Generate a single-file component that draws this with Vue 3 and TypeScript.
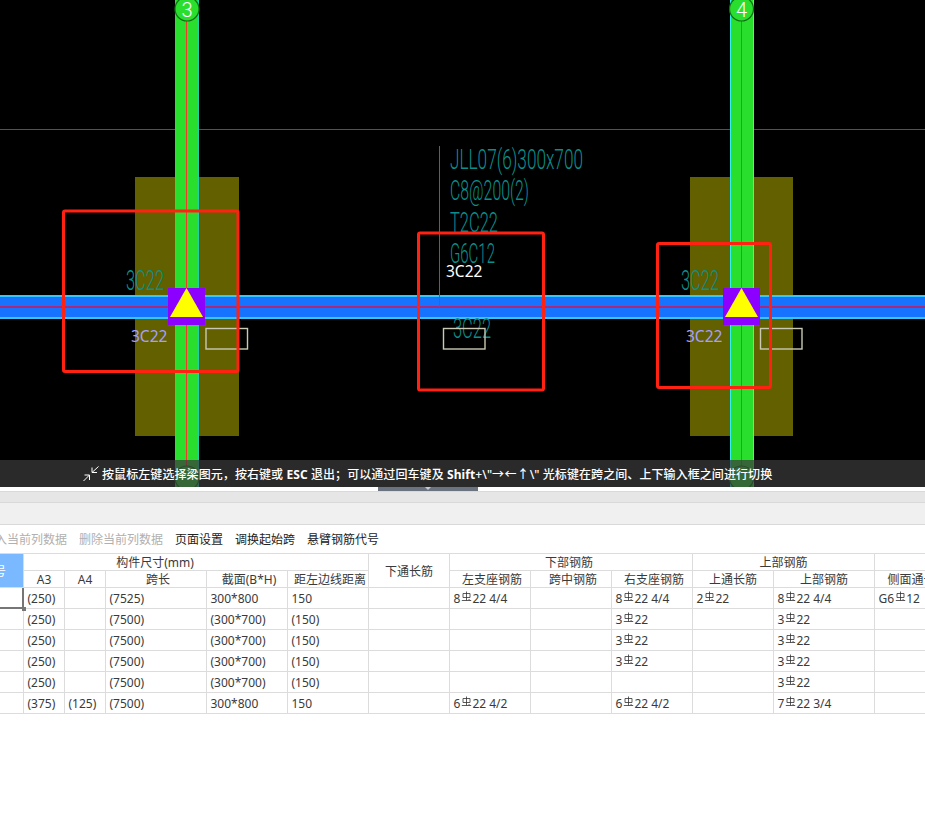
<script setup lang="ts">
interface BeamAxis { label: string; left: number; axis: number; bubble: number; band: number; bandWidth: number; node: number; edge: string }
interface Cell { pre?: string; post?: string; text?: string }

const axes: BeamAxis[] = [
  { label: '3', left: 175, axis: 186.5, bubble: 187, band: 135, bandWidth: 104, node: 168, edge: '#22cfa8' },
  { label: '4', left: 730, axis: 741.5, bubble: 741.5, band: 690, bandWidth: 103, node: 723, edge: '#30f0f0' },
]
const colWidths = [24, 41, 41, 101, 81, 81, 81, 81, 81, 81, 81, 101, 86]

const rows: Cell[][] = [
  [{ text: '(250)' }, {}, { text: '(7525)' }, { text: '300*800' }, { text: '150' }, {}, { pre: '8', post: '22 4/4' }, {}, { pre: '8', post: '22 4/4' }, { pre: '2', post: '22' }, { pre: '8', post: '22 4/4' }, { pre: 'G6', post: '12' }],
  [{ text: '(250)' }, {}, { text: '(7500)' }, { text: '(300*700)' }, { text: '(150)' }, {}, {}, {}, { pre: '3', post: '22' }, {}, { pre: '3', post: '22' }, {}],
  [{ text: '(250)' }, {}, { text: '(7500)' }, { text: '(300*700)' }, { text: '(150)' }, {}, {}, {}, { pre: '3', post: '22' }, {}, { pre: '3', post: '22' }, {}],
  [{ text: '(250)' }, {}, { text: '(7500)' }, { text: '(300*700)' }, { text: '(150)' }, {}, {}, {}, { pre: '3', post: '22' }, {}, { pre: '3', post: '22' }, {}],
  [{ text: '(250)' }, {}, { text: '(7500)' }, { text: '(300*700)' }, { text: '(150)' }, {}, {}, {}, {}, {}, { pre: '3', post: '22' }, {}],
  [{ text: '(375)' }, { text: '(125)' }, { text: '(7500)' }, { text: '300*800' }, { text: '150' }, {}, { pre: '6', post: '22 4/2' }, {}, { pre: '6', post: '22 4/2' }, {}, { pre: '7', post: '22 3/4' }, {}],
]
</script>

<template>
  <div class="page">
    <section class="canvas">
      <svg class="drawing" width="925" height="487" viewBox="0 0 925 487">
        <rect width="925" height="487" fill="#000" />
        <line x1="0" y1="129.5" x2="925" y2="129.5" class="ref-line" />

        <g v-for="a in axes" :key="a.label">
          <rect :x="a.band" y="177" :width="a.bandWidth" height="259" fill="#636000" />
          <rect :x="a.left" y="0" width="24" height="487" fill="#2ade2e" />
          <line :x1="a.left + 0.5" y1="0" :x2="a.left + 0.5" y2="487" :stroke="a.edge" />
          <line :x1="a.left + 23.5" y1="0" :x2="a.left + 23.5" y2="487" :stroke="a.edge" />
          <line :x1="a.axis" y1="0" :x2="a.axis" y2="487" class="col-axis" />
          <circle :cx="a.bubble" cy="9" r="12" class="axis-bubble" />
          <circle :cx="a.bubble" cy="478" r="12" class="axis-bubble" />
          <text :x="a.bubble" y="17" class="axis-label">{{ a.label }}</text>
        </g>

        <rect x="0" y="295" width="925" height="24" fill="#1573ff" />
        <rect x="0" y="295" width="925" height="2" fill="#36c6ff" />
        <rect x="0" y="317" width="925" height="2" fill="#36c6ff" />
        <rect x="0" y="306" width="925" height="2" fill="#a8287c" />

        <g v-for="a in axes" :key="'n' + a.label">
          <rect :x="a.node" y="288" width="37" height="37" fill="#8c00ff" />
          <polygon :points="`${a.node + 18.5},288 ${a.node + 2},317 ${a.node + 35},317`" fill="#ffff00" />
        </g>

        <line x1="439.5" y1="146" x2="439.5" y2="307" class="leader" />
        <text x="450" y="169" class="cad" textLength="133" lengthAdjust="spacingAndGlyphs">JLL07(6)300x700</text>
        <text x="450" y="200" class="cad" textLength="79" lengthAdjust="spacingAndGlyphs">C8@200(2)</text>
        <text x="450" y="232" class="cad" textLength="48" lengthAdjust="spacingAndGlyphs">T2C22</text>
        <text x="450" y="263" class="cad" textLength="45" lengthAdjust="spacingAndGlyphs">G6C12</text>
        <text x="126" y="290" class="cad" textLength="38" lengthAdjust="spacingAndGlyphs">3C22</text>
        <text x="681" y="290" class="cad" textLength="38" lengthAdjust="spacingAndGlyphs">3C22</text>
        <text x="453" y="338" class="cad" textLength="38" lengthAdjust="spacingAndGlyphs">3C22</text>

        <text x="131" y="342" class="tag">3C22</text>
        <text x="686" y="342" class="tag">3C22</text>
        <text x="446" y="277" class="tag tag-white">3C22</text>

        <rect x="206" y="328.5" width="41.5" height="20.5" class="box" />
        <rect x="760.5" y="328.5" width="41.5" height="20.5" class="box" />
        <rect x="443.5" y="328.5" width="41.5" height="20.5" class="box" />

        <rect x="63.5" y="211" width="174.5" height="160.5" rx="1.5" class="mark" />
        <rect x="418.5" y="233" width="125" height="157" rx="1.5" class="mark" />
        <rect x="657.5" y="243.5" width="113" height="144" rx="1.5" class="mark" />
      </svg>

      <div class="hint">
        <svg class="hint-icon" width="16" height="16" viewBox="0 0 16 16">
          <path d="M15.5 .5 9 6.5M9 1.5v5h5M.5 15 6.5 9M1.5 9h5v5" />
        </svg>
        <span>按鼠标左键选择梁图元，按右键或 <b>ESC</b> 退出；可以通过回车键及 <b>Shift</b>+\"<span class="arrows">→←↑</span>\" 光标键在跨之间、上下输入框之间进行切换</span>
      </div>
    </section>

    <div class="splitter">
      <div class="grip"><i></i></div>
    </div>
    <div class="band band-tab"></div>
    <div class="band band-tool"></div>

    <div class="toolbar">
      <span class="tool tool-first off">插入当前列数据</span>
      <span class="tool off">删除当前列数据</span>
      <span class="tool">页面设置</span>
      <span class="tool">调换起始跨</span>
      <span class="tool">悬臂钢筋代号</span>
    </div>

    <div class="grid-wrap">
      <table class="grid">
        <colgroup>
          <col v-for="(w, i) in colWidths" :key="i" :style="{ width: w + 'px' }" />
        </colgroup>
        <thead>
          <tr>
            <th rowspan="2" class="corner"><span>跨号</span></th>
            <th colspan="5" class="group-size">构件尺寸(mm)</th>
            <th rowspan="2">下通长筋</th>
            <th colspan="3" class="group-lower">下部钢筋</th>
            <th colspan="2">上部钢筋</th>
            <th colspan="2"></th>
          </tr>
          <tr>
            <th>A3</th>
            <th>A4</th>
            <th class="nudge">跨长</th>
            <th class="nudge">截面(B*H)</th>
            <th class="nudge">距左边线距离</th>
            <th class="nudge">左支座钢筋</th>
            <th class="nudge">跨中钢筋</th>
            <th class="nudge">右支座钢筋</th>
            <th>上通长筋</th>
            <th>上部钢筋</th>
            <th class="clip">侧面通长筋</th>
            <th></th>
          </tr>
        </thead>
        <tbody>
          <tr v-for="(row, r) in rows" :key="r">
            <td class="head-cell" :class="{ selected: r === 0 }">
              <div v-if="r === 0" class="sel-anchor"><i class="handle"></i></div>
            </td>
            <td v-for="(cell, c) in row" :key="c">
              <template v-if="cell.text">{{ cell.text }}</template>
              <template v-else-if="cell.pre">
                {{ cell.pre }}<svg class="rebar" width="11" height="11" viewBox="0 0 11 11"><path d="M2 2.5h7v4H2zM5.5 0.5v9M0.8 9.5h9.4M7.6 8l1.4 1.5" /></svg>{{ cell.post }}
              </template>
            </td>
            <td></td>
          </tr>
        </tbody>
      </table>
    </div>
  </div>
</template>

<style>
html, body {
  margin: 0;
  background: #fff;
  overflow: hidden;
}
</style>

<style scoped>
.page {
  width: 925px;
  height: 813px;
  overflow: hidden;
  background: #fff;
  font-family: "Noto Sans", "Noto Sans CJK SC", sans-serif;
  font-size: 12px;
  color: #3a3a3a;
}
.canvas {
  position: relative;
  height: 487px;
  background: #000;
}
.drawing {
  display: block;
}
.ref-line {
  stroke: #f01010;
  stroke-width: 1;
}
.col-axis {
  stroke: #f03a2a;
  stroke-width: 1;
}
.axis-bubble {
  fill: #2ade2e;
  stroke: #0e6e14;
  stroke-width: 1.2;
}
.axis-label {
  fill: #fff;
  font-family: "Roboto", sans-serif;
  font-size: 20px;
  font-weight: 300;
  text-anchor: middle;
}
.leader {
  stroke: #0a8484;
  stroke-width: 1;
}
.cad {
  fill: #0a8f8c;
  font-family: "Roboto", sans-serif;
  font-weight: 300;
  font-size: 27px;
}
.tag {
  fill: #a79fff;
  font-family: "Noto Sans", sans-serif;
  font-size: 15.5px;
}
.tag-white {
  fill: #fff;
}
.box {
  fill: none;
  stroke: #c9c9b4;
  stroke-width: 1.4;
}
.mark {
  fill: none;
  stroke: #ff2112;
  stroke-width: 3;
}
.hint {
  position: absolute;
  left: 0;
  right: 0;
  bottom: 0;
  height: 27px;
  padding-left: 83px;
  display: flex;
  align-items: center;
  gap: 3px;
  background: rgba(58, 58, 58, 0.72);
  color: #fff;
  font-weight: 500;
  letter-spacing: 0.08px;
  white-space: nowrap;
}
.hint b {
  font-weight: 700;
}
.arrows {
  letter-spacing: 0.5px;
}
.hint-icon {
  flex: none;
  fill: none;
  stroke: #fff;
  stroke-width: 1;
}
.splitter {
  height: 4px;
  background: #fff;
  position: relative;
}
.grip {
  position: absolute;
  left: 378px;
  top: 0;
  width: 100px;
  height: 4px;
  background: #6b7280;
}
.grip i {
  position: absolute;
  left: 47px;
  top: 0;
  border: 3px solid transparent;
  border-top-color: #c8ccd2;
  border-bottom-width: 0;
}
.band {
  box-sizing: border-box;
  border-top: 1px solid #d9d9d9;
}
.band-tab {
  height: 11px;
  background: #e6e6e6;
}
.band-tool {
  height: 22px;
  background: #f0f0f0;
}
.toolbar {
  box-sizing: border-box;
  height: 29px;
  border-top: 1px solid #d9d9d9;
  display: flex;
  align-items: center;
  gap: 12px;
  white-space: nowrap;
  color: #222;
}
.tool-first {
  margin-left: -17px;
}
.off {
  color: #b0b0b0;
}
.grid-wrap {
  overflow: hidden;
}
.grid {
  table-layout: fixed;
  width: 981px;
  border-collapse: separate;
  border-spacing: 0;
  border-top: 1px solid #dcdcdc;
}
.grid th,
.grid td {
  box-sizing: border-box;
  padding: 0;
  border-right: 1px solid #dcdcdc;
  border-bottom: 1px solid #dcdcdc;
  font-weight: 400;
  overflow: hidden;
  white-space: nowrap;
}
.grid th {
  height: 17px;
  line-height: 15px;
  text-align: center;
  padding-top: 1px;
}
.grid th.group-size {
  padding-right: 82px;
}
.grid th.group-lower {
  padding-right: 4px;
}
.grid th.nudge {
  padding-left: 4px;
}
.grid td {
  height: 21px;
  line-height: 19px;
  padding: 1px 0 0 3.5px;
}
.grid th.corner {
  background: #7ab8ff;
  color: #fff;
  text-align: right;
  padding-right: 18px;
  overflow: visible;
  direction: rtl;
}
.grid td.head-cell {
  padding: 0;
  overflow: visible;
  border-right: 1px solid #dcdcdc;
}
.grid td.selected {
  border-right: 2px solid #767676;
  border-bottom: 2px solid #767676;
}
.sel-anchor {
  position: relative;
  height: 19px;
}
.handle {
  position: absolute;
  right: -4px;
  bottom: -4px;
  width: 4px;
  height: 4px;
  background: #767676;
}
.rebar {
  display: inline-block;
  vertical-align: 1px;
  fill: none;
  stroke: #333;
  stroke-width: 0.8;
  margin: 0 0 0 1px;
}
</style>
